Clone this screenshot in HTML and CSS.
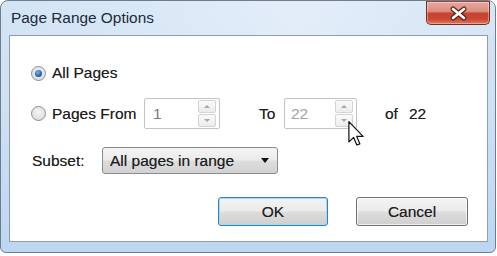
FILE: index.html
```html
<!DOCTYPE html>
<html>
<head>
<meta charset="utf-8">
<link rel="stylesheet" href="styles.css">
</head>
<body>
<div class="window">
  <div class="titlebar">
    <span class="title">Page Range Options</span>
    <div class="close">
      <svg width="62" height="22" viewBox="0 0 62 22">
        <path d="M26 7 L37 16 M37 7 L26 16" stroke="#5b2019" stroke-width="5" stroke-linecap="round"/>
        <path d="M26 7 L37 16 M37 7 L26 16" stroke="#ffffff" stroke-width="2.6" stroke-linecap="round"/>
      </svg>
    </div>
  </div>
  <div class="client">
    <div class="row row-all">
      <span class="radio checked"><span class="dot"></span></span>
      <span class="lbl">All Pages</span>
    </div>
    <div class="row row-pages">
      <span class="radio"></span>
      <span class="lbl lbl-from">Pages From</span>
      <div class="spin spin-from">
        <span class="val">1</span>
        <div class="spin-btns"><span class="sb"><i class="tri up"></i></span><span class="sb"><i class="tri down"></i></span></div>
      </div>
      <span class="lbl lbl-to">To</span>
      <div class="spin spin-to">
        <span class="val val-light">22</span>
        <div class="spin-btns"><span class="sb"><i class="tri up"></i></span><span class="sb"><i class="tri down"></i></span></div>
        <svg class="cursor" width="18" height="27" viewBox="0 0 13 20">
          <path d="M0.5 0.5 L0.5 15.5 L4 12.2 L6.4 17.8 L8.6 16.9 L6.3 11.4 L11 11.4 Z" fill="#ffffff" stroke="#111" stroke-width="0.9" stroke-linejoin="round"/>
        </svg>
      </div>
      <span class="lbl lbl-of">of</span><span class="lbl lbl-total">22</span>
    </div>
    <div class="row row-subset">
      <span class="lbl lbl-subset">Subset:</span>
      <div class="select">
        <span>All pages in range</span>
        <i class="caret"></i>
      </div>
    </div>
    <div class="row buttons">
      <button class="btn default">OK</button>
      <button class="btn">Cancel</button>
    </div>
  </div>
</div>
</body>
</html>
```
FILE: styles.css
```css
body {
  margin: 0;
  background: #ffffff;
  font-family: "Liberation Sans", Arial, sans-serif;
}

.window {
  width: 496px;
  height: 253px;
  box-sizing: border-box;
  border: 1px solid #6e7c8e;
  border-radius: 8px 8px 6px 6px;
  background: linear-gradient(#d3e4f5, #cfe1f4 40%, #bdd6f1);
  padding: 0 7px 10px 8px;
  display: flex;
  flex-direction: column;
}

.titlebar {
  height: 34px;
  flex: none;
  display: flex;
  justify-content: space-between;
  align-items: flex-start;
  background: linear-gradient(to right, rgba(255,255,255,0) 0%, rgba(255,255,255,0.35) 60%, rgba(255,255,255,0.1) 100%);
  margin: 0 -7px 0 -8px;
  padding: 0 7px 0 8px;
}

.title {
  font-size: 15.4px;
  color: #1c2a3a;
  margin: 8px 0 0 2px;
  line-height: 18px;
}

.close {
  width: 62px;
  height: 22px;
  margin-right: -2px;
  border: 1px solid #7a2b22;
  border-top-color: #9b4a40;
  border-radius: 0 0 5px 5px;
  background: linear-gradient(#e8a89d 0%, #dc8e82 42%, #c8442f 52%, #c94733 78%, #de7a5d 100%);
  box-shadow: inset 0 0 0 1px rgba(255,255,255,0.35);
}

.close svg { display: block; }

.client {
  flex: 1;
  background: #ffffff;
  border: 1px solid #8e9daf;
  padding: 22px 19px 0 21px;
  display: flex;
  flex-direction: column;
  color: #1d1d1d;
}

.row {
  display: flex;
  align-items: center;
}

.lbl {
  font-size: 15.5px;
  white-space: nowrap;
  text-shadow: 0 0 0.6px rgba(0,0,0,0.5);
}

.row-all { height: 30px; }
.row-pages { height: 31px; margin-top: 10px; }
.row-subset { height: 27px; margin-top: 18px; padding-left: 1px; }
.buttons { margin-top: 23px; justify-content: flex-end; gap: 28px; }

.radio {
  width: 15px;
  height: 15px;
  box-sizing: border-box;
  border-radius: 50%;
  border: 1px solid #8e8f8f;
  background: radial-gradient(circle at 50% 40%, #f4f4f4, #d6d6d6);
  margin-right: 6px;
  flex: none;
  display: flex;
  align-items: center;
  justify-content: center;
}

.radio .dot {
  width: 7px;
  height: 7px;
  border-radius: 50%;
  background: radial-gradient(circle at 40% 35%, #6fbdf0, #1f6cb5 55%, #123f75);
}

.lbl-from { width: 92px; }

.spin {
  width: 76px;
  height: 31px;
  box-sizing: border-box;
  border: 1px solid #c4c4c4;
  border-radius: 2px;
  background: #fff;
  display: flex;
  align-items: center;
  justify-content: space-between;
  padding: 0 3px 0 8px;
  position: relative;
  flex: none;
}

.spin-to { width: 73px; padding-left: 6px; }

.val {
  font-size: 15.5px;
  color: #7a7a7a;
}

.val-light { color: #a3a3a3; }

.spin-btns {
  display: flex;
  flex-direction: column;
  gap: 1px;
}

.sb {
  width: 18px;
  height: 13px;
  box-sizing: border-box;
  border: 1px solid #d3d3d3;
  border-radius: 2px;
  background: linear-gradient(#fafafa, #ececec);
  display: flex;
  align-items: center;
  justify-content: center;
}

.tri {
  width: 0;
  height: 0;
  border-left: 3px solid transparent;
  border-right: 3px solid transparent;
}

.tri.up { border-bottom: 3px solid #a8a8a8; }
.tri.down { border-top: 3px solid #a8a8a8; }

.cursor {
  position: absolute;
  left: 63px;
  top: 22px;
}

.lbl-to { margin-left: 39px; width: 25px; }
.lbl-of { margin-left: 28px; }
.lbl-total { margin-left: 11px; }

.lbl-subset { width: 70px; }

.select {
  width: 176px;
  height: 27px;
  box-sizing: border-box;
  border: 1px solid #8b8b8b;
  border-radius: 3px;
  background: linear-gradient(#f4f4f4 0%, #ebebeb 48%, #dddddd 52%, #d2d2d2 100%);
  display: flex;
  align-items: center;
  justify-content: space-between;
  padding: 0 8px 0 7px;
  font-size: 15.5px;
  color: #1e1e1e;
  text-shadow: 0 0 0.6px rgba(0,0,0,0.5);
}

.caret {
  width: 0;
  height: 0;
  border-left: 4.5px solid transparent;
  border-right: 4.5px solid transparent;
  border-top: 5px solid #111;
}

.btn {
  height: 29px;
  width: 112px;
  box-sizing: border-box;
  border: 1px solid #707070;
  border-radius: 3px;
  background: linear-gradient(#f3f3f3 0%, #ebebeb 48%, #dddddd 52%, #cfcfcf 100%);
  font-family: "Liberation Sans", Arial, sans-serif;
  font-size: 15.5px;
  color: #1e1e1e;
  padding: 0;
  box-shadow: inset 0 0 0 1px rgba(255,255,255,0.7);
  text-shadow: 0 0 0.6px rgba(0,0,0,0.5);
}

.btn.default {
  width: 110px;
  border-color: #3c7fb1;
  box-shadow: inset 0 0 0 1px #9fdcf7;
}
```
